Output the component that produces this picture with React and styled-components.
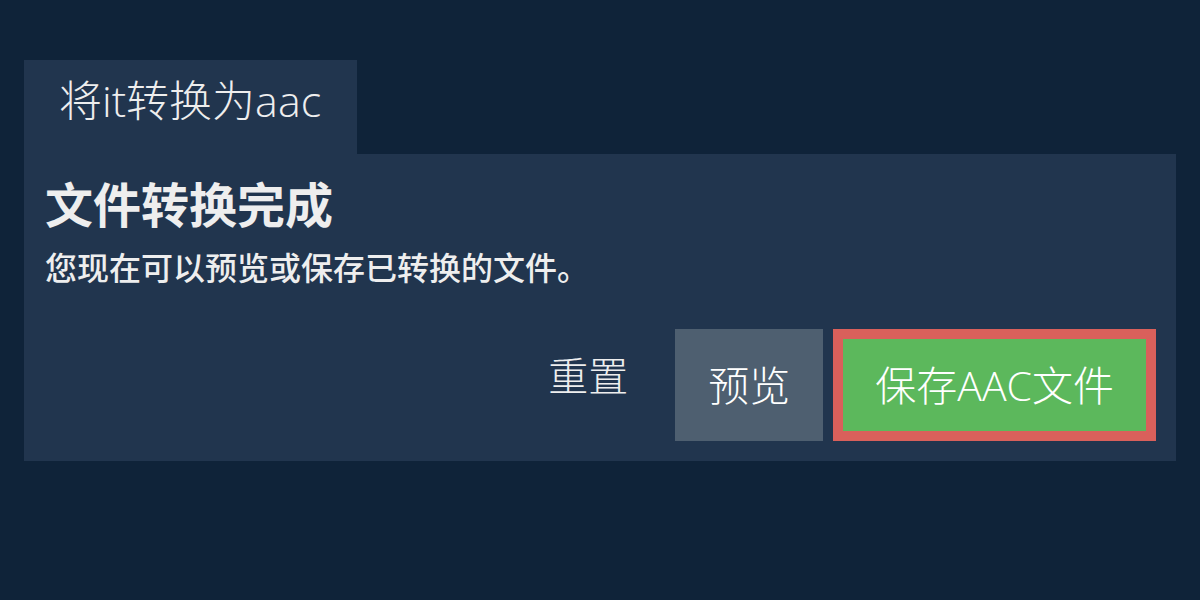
import React from "react";
import styled, { createGlobalStyle } from "styled-components";

const FONT = `"Open Sans", "Noto Sans CJK SC", sans-serif`;

const Global = createGlobalStyle`
  html, body { margin: 0; padding: 0; background: #0f2339; }
  body { font-family: ${FONT}; color: #eeeeee; }
  * { box-sizing: border-box; }
`;

const Page = styled.div`
  width: 1200px;
  height: 600px;
  padding: 60px 24px 0;
  background: #0f2339;
`;

const Tab = styled.div`
  display: inline-flex;
  align-items: center;
  height: 94px;
  padding: 0 36px 13px 35px;
  background: #21354e;
  font-size: 43px;
  font-weight: 300;
  line-height: 1;
  color: #eeeeee;
`;

const Panel = styled.section`
  background: #21354e;
  padding: 22px 20px 20px 21px;
`;

const Title = styled.h2`
  margin: 0;
  font-size: 48px;
  font-weight: 700;
  line-height: 58px;
  color: #eeeeee;
`;

const Subtitle = styled.p`
  margin: 14px 0 0;
  font-size: 32px;
  font-weight: 500;
  line-height: 40px;
  color: #eeeeee;
`;

const Actions = styled.div`
  display: flex;
  justify-content: flex-end;
  align-items: center;
  gap: 10px;
  margin-top: 41px;
`;

const ResetLink = styled.a`
  font-size: 40px;
  font-weight: 300;
  line-height: 1;
  color: #eeeeee;
  margin-right: 37px;
  padding-bottom: 18px;
  cursor: pointer;
`;

const Button = styled.button`
  height: 112px;
  padding: 0 ${(p) => (p.$primary ? 32 : 33)}px;
  border: ${(p) => (p.$primary ? "10px solid #d9605b" : "none")};
  background: ${(p) => (p.$primary ? "#5cb85c" : "#4e5f70")};
  color: #ffffff;
  font-family: ${FONT};
  font-size: 41px;
  font-weight: 300;
  line-height: 1;
  cursor: pointer;
`;

export default function App() {
  return (
    <>
      <Global />
      <Page>
        <Tab>将it转换为aac</Tab>
        <Panel>
          <Title>文件转换完成</Title>
          <Subtitle>您现在可以预览或保存已转换的文件。</Subtitle>
          <Actions>
            <ResetLink>重置</ResetLink>
            <Button>预览</Button>
            <Button $primary>保存AAC文件</Button>
          </Actions>
        </Panel>
      </Page>
    </>
  );
}
